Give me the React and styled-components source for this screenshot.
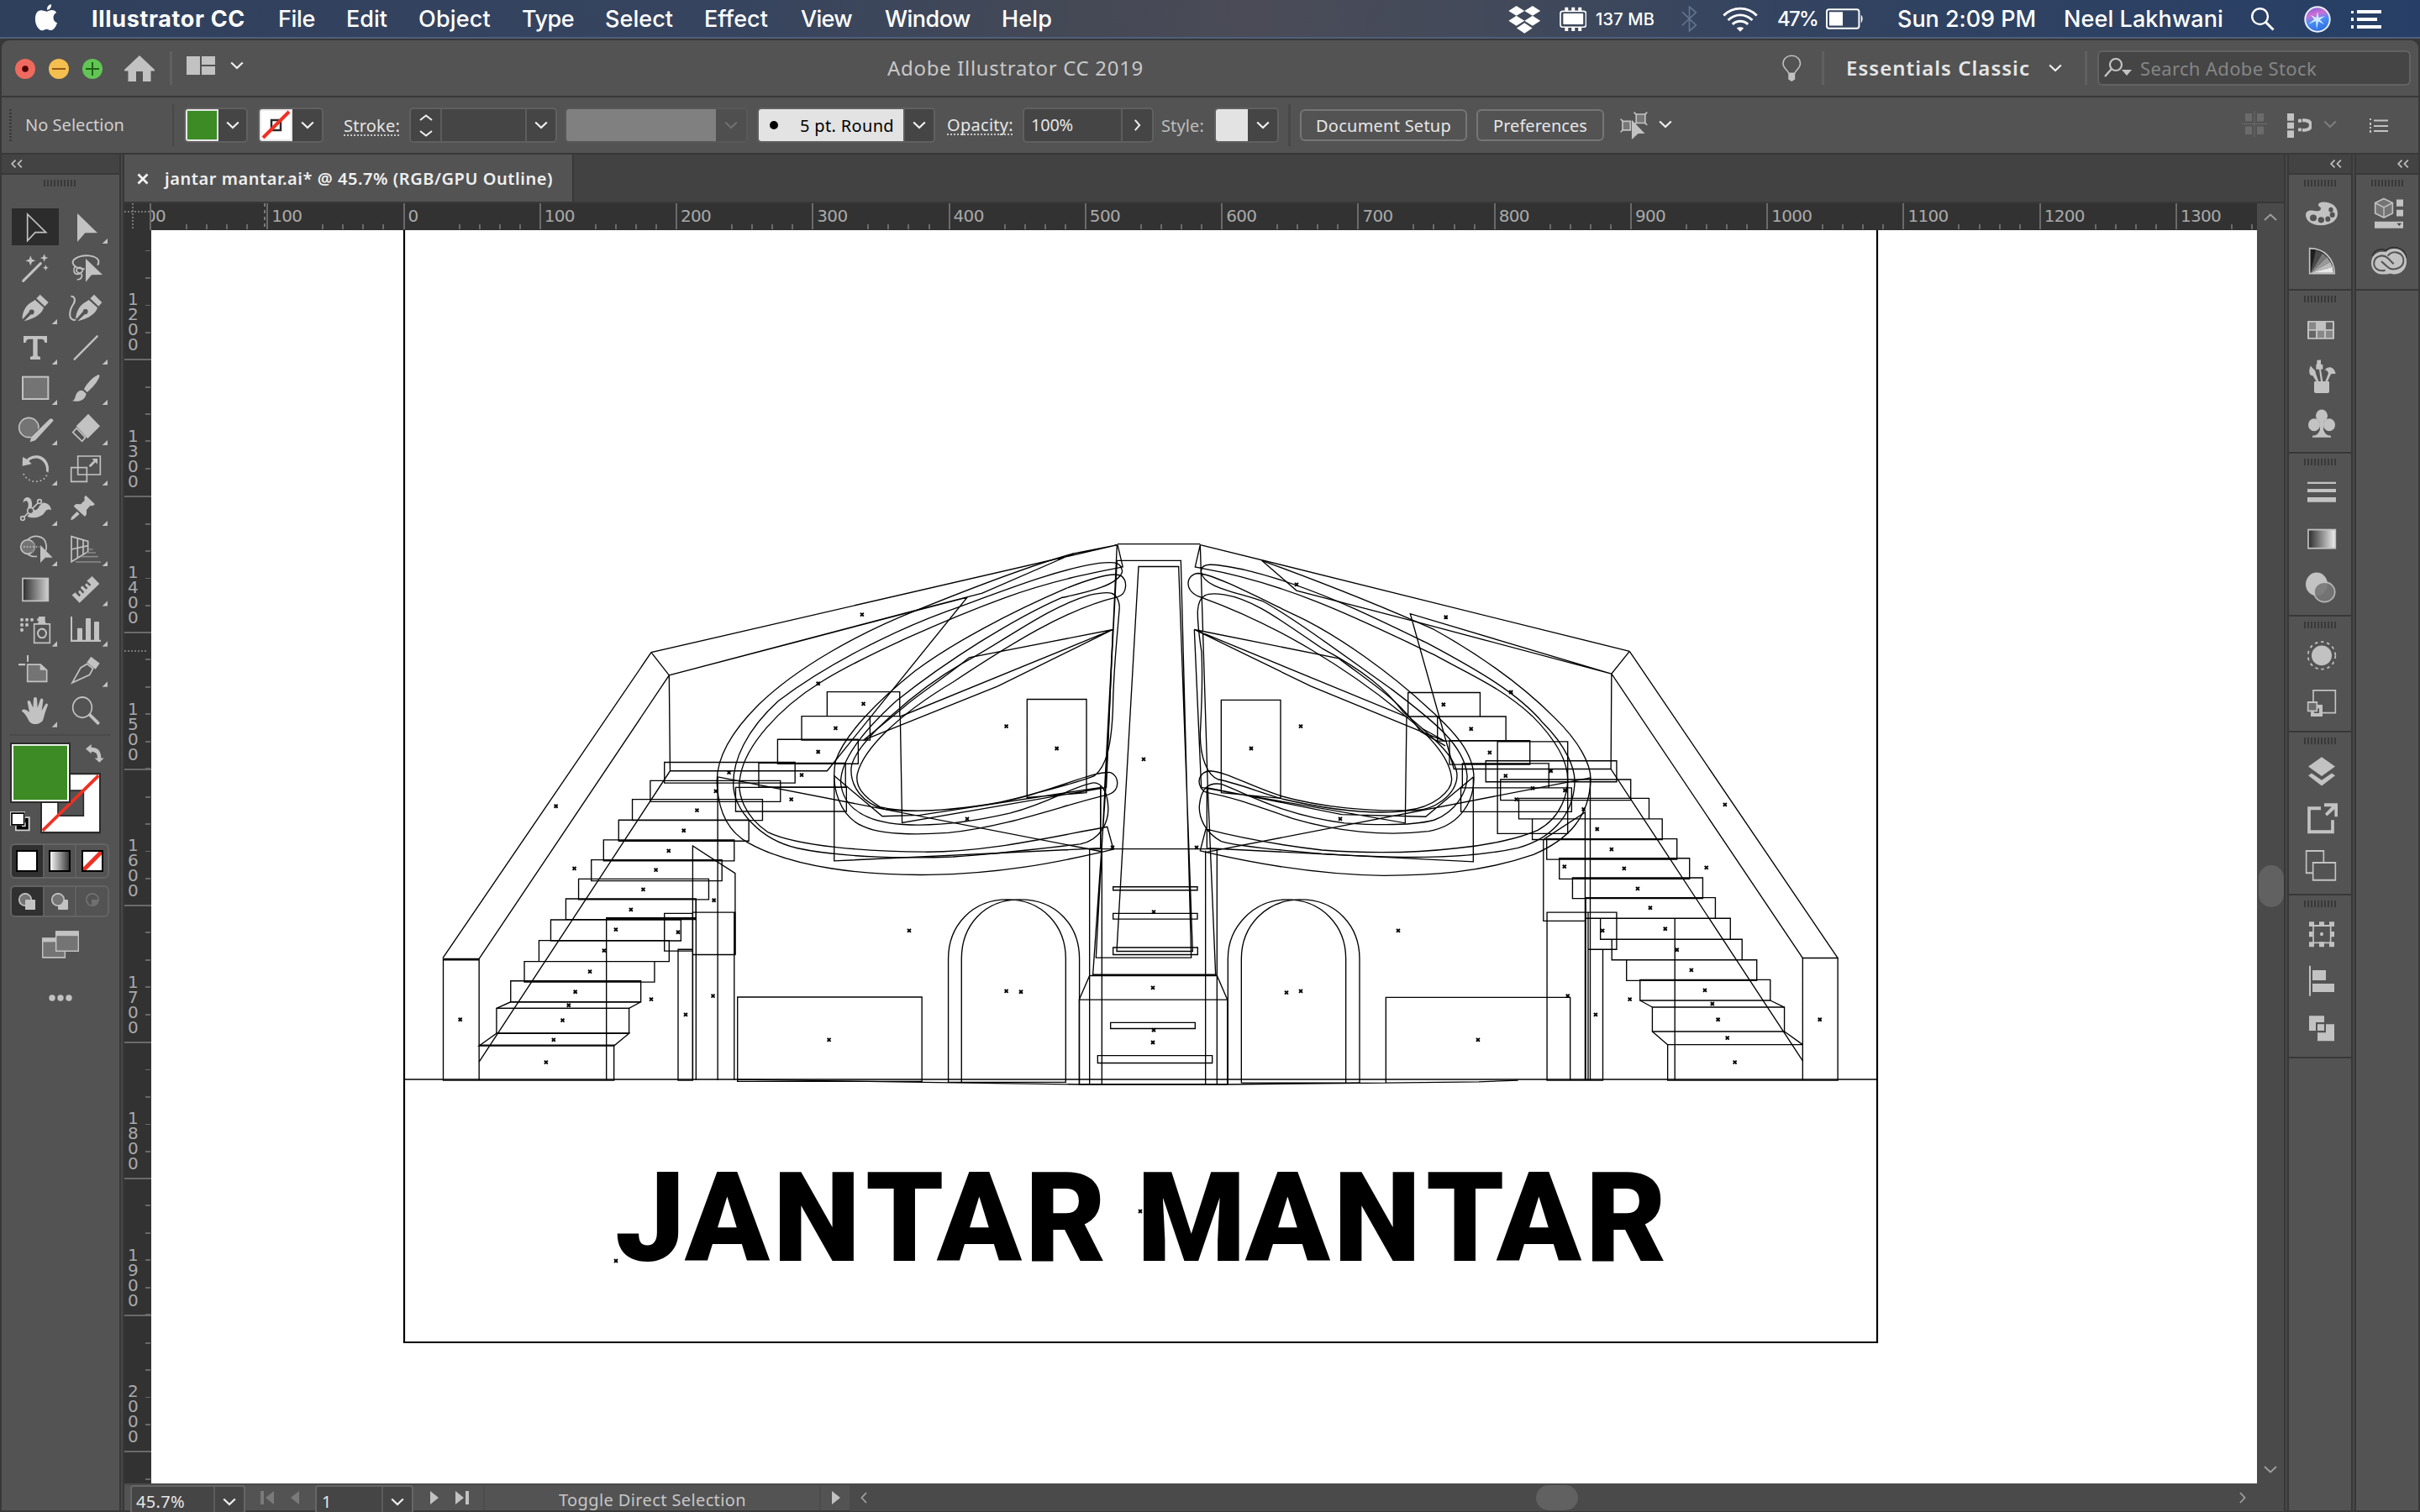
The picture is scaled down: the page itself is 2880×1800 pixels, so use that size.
import React, { useLayoutEffect, useRef, useState } from "react";
import styled, { createGlobalStyle, css } from "styled-components";

const C = {
  panel: "#535353",
  dark: "#383838",
  well: "#434343",
  field: "#454545",
  rim: "#666666",
  icon: "#c2c2c2",
  ruler: "#323232",
  tick: "#6a6a6a",
  green: "#3d8b25",
  red: "#ee3124",
};

const GlobalStyle = createGlobalStyle`
  *, *::before, *::after { box-sizing: border-box; }
  html, body { margin: 0; padding: 0; background: ${C.dark}; overflow: hidden; }
  body { font-family: "Noto Sans", "Open Sans", sans-serif; font-size: 20px; color: #e0e0e0; }
  svg { display: block; flex: none; }
`;

/* ---------- shared parts ---------- */

const Text = styled.span`
  display: inline-block;
  flex: none;
  white-space: pre;
  line-height: 1;
  margin-left: ${(p) => p.$ml || 0}px;
  width: ${(p) => p.$w}px;
  font-size: ${(p) => p.$size || 20}px;
  font-weight: ${(p) => p.$weight || 400};
  color: ${(p) => p.$color || "#e6e6e6"};
  padding-top: ${(p) => p.$drop || 0}px;
  ${(p) =>
    p.$dotted &&
    css`
      padding-bottom: 2px;
      background: repeating-linear-gradient(90deg, #c8c8c8 0 2px, transparent 2px 4px) bottom / 100% 2px no-repeat;
    `}
`;

// Tracks a label in or out so that it fills the width reserved for it.
function Label({ w, children, ...rest }) {
  const ref = useRef(null);
  const [spacing, setSpacing] = useState(0);
  useLayoutEffect(() => {
    const natural = ref.current.getBoundingClientRect().width;
    setSpacing((w - natural) / String(children).length);
  }, [w, children]);
  return (
    <Text $w={w} {...rest}>
      <span ref={ref} style={{ letterSpacing: spacing }}>
        {children}
      </span>
    </Text>
  );
}

const Glyph = styled.svg.attrs({ preserveAspectRatio: "none" })`
  width: ${(p) => p.$w}px;
  height: ${(p) => p.$h}px;
  margin-left: ${(p) => p.$ml || 0}px;
  margin-top: ${(p) => p.$mt || 0}px;
  align-self: ${(p) => p.$align || "center"};
  fill: ${(p) => p.$fill || C.icon};
`;

const Rule = styled.div`
  flex: none;
  width: ${(p) => p.$w || 3}px;
  height: ${(p) => p.$h}px;
  margin-left: ${(p) => p.$ml || 0}px;
  background: ${(p) => p.$color || "#606060"};
`;

const Chevron = ({ ml, mt, color = "#f0f0f0", w = 16 }) => (
  <Glyph viewBox="0 0 16 10" $w={w} $h={10} $ml={ml} $mt={mt}>
    <path d="M1.2 1.5 8 8 14.8 1.5" fill="none" stroke={color} strokeWidth="2.2" />
  </Glyph>
);

const Grip = styled.div`
  width: 38px;
  height: 8px;
  margin: ${(p) => p.$m || "6px auto 4px"};
  background: repeating-linear-gradient(90deg, #393939 0 2px, transparent 2px 4px);
`;

/* ---------- menu bar ---------- */

const MenuBar = styled.header`
  display: flex;
  align-items: center;
  height: 46px;
  padding: 1px 0 0 41px;
  border-bottom: 2px solid #4e5f7c;
  font-family: Inter, "Liberation Sans", sans-serif;
  background: linear-gradient(90deg, #2f405d 0%, #36445f 30%, #454955 45%, #4a4b57 52%, #434a5a 61%, #334360 74%, #273f66 100%);
`;

const menus = [
  ["File", 44, 39], ["Edit", 49, 37], ["Object", 86, 37], ["Type", 62, 37], ["Select", 81, 37],
  ["Effect", 76, 37], ["View", 61, 39], ["Window", 102, 39], ["Help", 60, 37],
];

function SystemMenu() {
  const white = { $color: "#fff", $weight: 500 };
  return (
    <MenuBar>
      <Glyph viewBox="44 12 30 96" $w={27} $h={32} $fill="#fff" $mt={-4}>
        <path d="M61 33C60 24 62 15 66 12C67 21 65 30 61 33ZM60 38C62 38 64 33 67 33C70 33 72 37 73 42C70 47 69 54 69 60C69 69 71 76 74 79C73 89 70 105 66 105C64 105 62 101 60 101C58 101 56 106 54 106C50 106 45 86 45 66C45 46 48 34 53 34C56 34 58 38 60 38Z" />
      </Glyph>
      <Label w={183} $ml={41} $size={27} $color="#fff" $weight={700}>Illustrator CC</Label>
      {menus.map(([name, w, gap]) => (
        <Label key={name} w={w} $ml={gap} $size={27} {...white}>{name}</Label>
      ))}
      <Glyph viewBox="44 15 116 103" $w={38.5} $h={34} $ml={543} $fill="#fff">
        <path d="M73 18 102 36 73 54 45 36ZM131 18 159 36 131 54 102 36ZM73 54 102 72 73 90 45 72ZM131 54 159 72 131 90 102 72ZM102 79 130 98 102 117 74 98Z" />
      </Glyph>
      <Glyph viewBox="227 22 98 86" $w={32.5} $h={29} $ml={22} $fill="#fff">
        <rect x="230" y="38" width="92" height="56" rx="8" fill="none" stroke="#fff" strokeWidth="5" />
        <rect x="240" y="46" width="72" height="38" rx="3" />
        <path d="M246 24h12v14h-12ZM270 24h12v14h-12ZM294 24h12v14h-12ZM246 94h12v14h-12ZM270 94h12v14h-12ZM294 94h12v14h-12Z" />
      </Glyph>
      <Label w={70} $ml={11} $size={20} {...white}>137 MB</Label>
      <Glyph viewBox="664 20 58 98" $w={19} $h={33} $ml={32}>
        <path d="M667 44 717 91 693 112V26L717 46 667 92" fill="none" stroke="#66738c" strokeWidth="5" />
      </Glyph>
      <Glyph viewBox="809 18 128 92" $w={42} $h={30} $ml={30} $fill="#fff">
        <g fill="none" stroke="#fff" strokeWidth="9">
          <path d="M813 50C847 16 899 16 933 50M829 67C855 42 891 42 917 67M845 82C861 67 885 67 901 82" />
        </g>
        <path d="M860 96Q873 88 886 96L873 109Z" />
      </Glyph>
      <Label w={48} $ml={23} $size={24} {...white}>47%</Label>
      <Glyph viewBox="1175 28 140 76" $w={46} $h={25} $ml={10} $fill="#fff">
        <rect x="1178" y="32" width="117" height="68" rx="8" fill="none" stroke="#fff" strokeWidth="6" />
        <path d="M1187 41h49v49h-49ZM1302 50Q1314 65 1302 82Z" />
      </Glyph>
      <Label w={165} $ml={39} $size={27} {...white}>Sun 2:09 PM</Label>
      <Label w={190} $ml={33} $size={27} {...white}>Neel Lakhwani</Label>
      <Glyph viewBox="0 0 30 30" $w={29} $h={29} $ml={32}>
        <circle cx="12" cy="12" r="9.7" fill="none" stroke="#fff" strokeWidth="2.5" />
        <path d="M19 19 28.5 28.5" stroke="#fff" strokeWidth="3" />
      </Glyph>
      <Glyph viewBox="0 0 32 32" $w={32} $h={32} $ml={35}>
        <defs>
          <linearGradient id="siri" x1="0.3" y1="0" x2="0.6" y2="1">
            <stop offset="0" stopColor="#7d62d8" />
            <stop offset="0.3" stopColor="#cf6fd4" />
            <stop offset="0.55" stopColor="#4a8df5" />
            <stop offset="1" stopColor="#2b6fe0" />
          </linearGradient>
        </defs>
        <circle cx="16" cy="16" r="14.700" fill="url(#siri)" stroke="#eef0fa" strokeWidth="2" />
        <path d="M16 7 17.500 14 25 12 19 16.500 24 22 17 18.500 15 28 14 18 5 22 12 16 8 11 14.500 14Z" fill="#e4f9ff" opacity="0.85" />
      </Glyph>
      <Glyph viewBox="0 0 36 22" $w={36} $h={22} $ml={24} $fill="#fff">
        <path d="M0 1h3v3H0ZM7 0h29v4H7ZM0 9h3v4H0ZM7 9h24v4H7ZM0 18h3v4H0ZM7 18h29v4H7Z" />
      </Glyph>
    </MenuBar>
  );
}

/* ---------- application title bar ---------- */

const AppWindow = styled.div`
  display: flex;
  flex-direction: column;
  width: 2880px;
  height: 1754px;
  padding: 2px 2px;
  border-radius: 10px 10px 0 0;
  background: ${C.dark};
`;

const TitleBar = styled.div`
  display: flex;
  align-items: center;
  height: 68px;
  border-bottom: 2px solid ${C.dark};
  border-radius: 9px 9px 0 0;
  background: ${C.panel};
`;

const Light = styled.div`
  display: grid;
  place-items: center;
  width: 24px;
  height: 24px;
  margin: 2px 0 0 ${(p) => p.$ml}px;
  border-radius: 50%;
  background: ${(p) => p.$color};
`;

const SearchBox = styled.div`
  display: flex;
  align-items: center;
  width: 373px;
  height: 42px;
  margin-left: 12px;
  padding-left: 6px;
  border: 2px solid #626262;
  border-radius: 6px;
  background: ${C.field};
`;

function AppTitle() {
  return (
    <TitleBar>
      <Light $ml={16} $color="#ee6a5f">
        <Glyph viewBox="0 0 8 8" $w={8} $h={8} $fill="#4d0000"><circle cx="4" cy="4" r="3.8" /></Glyph>
      </Light>
      <Light $ml={16} $color="#f5bf4f">
        <Glyph viewBox="0 0 16 2" $w={16} $h={2.5} $fill="#925a16"><path d="M0 0h16v2H0Z" /></Glyph>
      </Light>
      <Light $ml={16} $color="#62c655">
        <Glyph viewBox="0 0 16 16" $w={16} $h={16} $fill="#1f6416"><path d="M0 7h16v2H0ZM7 0h2v16H7Z" /></Glyph>
      </Light>
      <Glyph viewBox="0 0 36 31" $w={36} $h={31} $ml={26}>
        <path d="M18 0 36 17V18.500H31.500V31H22V19H14V31H4.500V18.500H0V17Z" />
      </Glyph>
      <Rule $h={40} $ml={18} />
      <Glyph viewBox="0 0 34 22" $w={34} $h={22} $ml={17} $mt={-7}>
        <path d="M0 0h16v22H0ZM18 0h16v10H18ZM18 12h16v10H18Z" />
      </Glyph>
      <Chevron ml={18} mt={-7} />
      <Label w={305} $ml={766} $size={24} $color="#c8c8c8">Adobe Illustrator CC 2019</Label>
      <Glyph viewBox="1022 190 68 98" $w={22.500} $h={32} $ml={760}>
        <path d="M1045 258C1042 245 1025 240 1025 223C1025 206 1038 194 1056 194C1074 194 1087 206 1087 223C1087 240 1070 245 1067 258Z" fill="none" stroke={C.icon} strokeWidth="4.500" />
        <path d="M1044 258h24v22l-12 8-12-8Z" />
      </Glyph>
      <Rule $h={40} $ml={24.500} />
      <Label w={219} $ml={26} $size={24} $weight={600}>Essentials Classic</Label>
      <Chevron ml={22} />
      <Rule $h={40} $ml={27} />
      <SearchBox>
        <Glyph viewBox="0 0 34 24" $w={34} $h={24}>
          <circle cx="14" cy="8" r="7" fill="none" stroke={C.icon} strokeWidth="2.200" />
          <path d="M9 13 1 22" stroke={C.icon} strokeWidth="2.500" />
          <path d="M21 14h12l-6 7Z" />
        </Glyph>
        <Label w={210} $ml={9} $size={22} $color="#858585">Search Adobe Stock</Label>
      </SearchBox>
    </TitleBar>
  );
}

/* ---------- control bar ---------- */

const ControlRow = styled.div`
  display: flex;
  align-items: center;
  height: 68px;
  padding-left: 9px;
  border-bottom: 2px solid ${C.dark};
  background: ${C.panel};
`;

const DotGrip = styled.div`
  width: 3px;
  height: 38px;
  background: repeating-linear-gradient(#393939 0 2px, transparent 2px 4px);
`;

const Combo = styled.div`
  display: flex;
  flex: none;
  width: ${(p) => p.$w}px;
  height: 42px;
  margin-left: ${(p) => p.$ml}px;
  border: 2px solid ${(p) => (p.$off ? "#585858" : "#606060")};
  border-radius: 5px;
  background: ${(p) => (p.$off ? "#4f4f4f" : C.field)};
  overflow: hidden;
`;

const Part = styled.div`
  display: flex;
  flex: ${(p) => (p.$w ? `0 0 ${p.$w}px` : 1)};
  align-items: center;
  justify-content: ${(p) => (p.$start ? "flex-start" : "center")};
  padding-left: ${(p) => p.$start || 0}px;
  border-left: ${(p) => (p.$line ? "2px solid #5c5c5c" : 0)};
  background: ${(p) => p.$bg || "transparent"};
`;

const GreenChip = styled.div`
  width: 39px;
  height: 38px;
  border: 2px solid #e8e8e8;
  background: ${C.green};
`;

const Steppers = styled.div`
  display: flex;
  flex-direction: column;
  gap: 11px;
`;

const PushButton = styled.button`
  display: flex;
  flex: none;
  align-items: center;
  justify-content: center;
  width: ${(p) => p.$w}px;
  height: 38px;
  margin-left: ${(p) => p.$ml}px;
  padding: 0;
  border: 2px solid #767676;
  border-radius: 6px;
  background: transparent;
  font-family: inherit;
`;

function ControlBar() {
  return (
    <ControlRow>
      <DotGrip />
      <Label w={118} $ml={16} $color="#cfcfcf">No Selection</Label>
      <Rule $w={2} $h={50} $ml={57} $color="#484848" />
      <Combo $w={76} $ml={12}>
        <Part $w={38}><GreenChip /></Part>
        <Part><Chevron /></Part>
      </Combo>
      <Combo $w={78} $ml={12}>
        <Part $w={39} $bg="#e8e8e8">
          <Glyph viewBox="0 0 39 38" $w={39} $h={38}>
            <path d="M2 2h35v34H2Z" fill="#fff" />
            <path d="M14 13h11v12H14Z" fill="none" stroke="#2b2b2b" strokeWidth="2.500" />
            <path d="M4 34 35 3" stroke={C.red} strokeWidth="4" />
          </Glyph>
        </Part>
        <Part><Chevron /></Part>
      </Combo>
      <Label w={67} $ml={24} $dotted $drop={3}>Stroke:</Label>
      <Combo $w={176} $ml={11}>
        <Part $w={35}>
          <Steppers>
            <Glyph viewBox="0 0 16 8" $w={16} $h={8}><path d="M1 7 8 1.500 15 7" fill="none" stroke="#eee" strokeWidth="2" /></Glyph>
            <Glyph viewBox="0 0 16 8" $w={16} $h={8}><path d="M1 1 8 6.500 15 1" fill="none" stroke="#eee" strokeWidth="2" /></Glyph>
          </Steppers>
        </Part>
        <Part $line />
        <Part $w={36} $line><Chevron /></Part>
      </Combo>
      <Combo $w={218} $ml={9} $off>
        <Part $bg="#808080" />
        <Part $w={36}><Chevron color="#707070" /></Part>
      </Combo>
      <Combo $w={212} $ml={11}>
        <Part $w={172} $bg="#e3e3e3" $start={13}>
          <Glyph viewBox="0 0 10 10" $w={10} $h={10} $fill="#000"><circle cx="5" cy="5" r="5" /></Glyph>
          <Label w={112} $ml={26} $drop={2} $color="#000">5 pt. Round</Label>
        </Part>
        <Part $line><Chevron /></Part>
      </Combo>
      <Label w={79} $ml={14} $dotted $drop={2}>Opacity:</Label>
      <Combo $w={156} $ml={11}>
        <Part $start={8}><Label w={50}>100%</Label></Part>
        <Part $w={37} $line>
          <Glyph viewBox="0 0 10 16" $w={9} $h={14}><path d="M2 1 8 8 2 15" fill="none" stroke="#eee" strokeWidth="2.200" /></Glyph>
        </Part>
      </Combo>
      <Label w={51} $ml={9} $drop={2} $color="#bdbdbd">Style:</Label>
      <Combo $w={77} $ml={12}>
        <Part $w={38} $bg="#e3e3e3" />
        <Part><Chevron /></Part>
      </Combo>
      <Rule $w={3} $h={50} $ml={11} $color="#484848" />
      <PushButton $w={199} $ml={11}><Label w={161} $drop={1}>Document Setup</Label></PushButton>
      <PushButton $w={152} $ml={11}><Label w={112} $drop={1}>Preferences</Label></PushButton>
      <Glyph viewBox="449 395 98 98" $w={32.500} $h={33} $ml={19}>
        <g fill="#777" stroke={C.icon} strokeWidth="5">
          <path d="M458 429h28v31h-28ZM507 404h32v31h-32Z" />
          <path d="M451 421l8 8M451 467l8-8M499 397l8 8M546 397l-8 8M546 442l-8-8M499 442l8-8" fill="none" />
        </g>
        <path d="M491 424 538 472 514 472 491 493Z" />
      </Glyph>
      <Chevron ml={13} mt={-3} />
      <Glyph viewBox="0 0 30 30" $w={30} $h={31} $ml={678} $fill="#6b6b6b" $mt={-3}>
        <path d="M4 3h8v9H4ZM18 3h8v9h-8ZM4 18h8v9H4ZM18 18h8v9h-8ZM14.500 0h1v30h-1ZM0 14.500h30v1H0Z" />
      </Glyph>
      <Glyph viewBox="0 0 30 30" $w={30} $h={29} $ml={23}>
        <path d="M1 0h8v9H1ZM1 11h8v8H1ZM1 21h8v9H1ZM14 7h4v4h-4ZM14 18h4v4h-4Z" />
        <path d="M19 8.500h3Q29 9 29 14.500T22 20.500H19" fill="none" stroke={C.icon} strokeWidth="4" />
      </Glyph>
      <Chevron ml={14} mt={-3} color="#7c7c7c" />
      <Glyph viewBox="0 0 22 17" $w={22} $h={17} $ml={39}>
        <path d="M0 0h2v2H0ZM5 1.500h17v2H5ZM0 5h2v3H0ZM0 10h2v2H0ZM5 8h17v2H5ZM5 14h17v2H5ZM0 14h2v3H0Z" />
      </Glyph>
    </ControlRow>
  );
}

/* ---------- tools panel ---------- */

const Workspace = styled.div`
  display: flex;
  flex: 1;
  min-height: 0;
`;

const PanelHead = styled.div`
  display: flex;
  align-items: center;
  justify-content: ${(p) => (p.$right ? "flex-end" : "flex-start")};
  height: 24px;
  padding: 0 11px;
  border-bottom: 2px solid ${C.dark};
  background: ${C.well};
`;

const Collapse = () => (
  <Glyph viewBox="0 0 14 10" $w={14} $h={10}>
    <path d="M5.500 .7 1.200 5l4.300 4.300M12.800.7 8.500 5l4.300 4.300" fill="none" stroke={C.icon} strokeWidth="1.700" />
  </Glyph>
);

const Seam = styled.div`
  flex: none;
  width: 6px;
  border: solid ${C.dark};
  border-width: 0 2px;
  background: #484848;
`;

const ToolPanel = styled.aside`
  flex: none;
  width: 140px;
  background: ${C.panel};
`;

const ToolGrid = styled.div`
  display: grid;
  grid-template-columns: 60px 60px;
  grid-auto-rows: 48px;
  margin: 0 10px;
`;

const ToolCell = styled.button`
  display: block;
  padding: 0;
  border: 0;
  background: transparent;
  ${(p) => p.$on && css`
    background: linear-gradient(#2c2c2c, #2c2c2c) 2px 2px / 56px 44px no-repeat;
  `}
`;

const st = (w = 6) => ({ fill: "none", stroke: C.icon, strokeWidth: w });

// Rows 0-8 use units of 1/3 px; the later rows are drawn on a slightly flatter grid.
const tools = [
  [<path d="M98 225V320L126 290H164Z" {...st(5)} />, 0],
  [<path d="M276 222V324L304 292H348Z" />, 1],
  [<><path d="M83 463 145 401" {...st(9)} strokeLinecap="round" /><path d="M109 373l5 13 13 5-13 5-5 13-5-13-13-5 13-5ZM158 367l4 10 10 4-10 4-4 10-4-10-10-4 10-4ZM163 406l3 7 7 3-7 3-3 8-3-8-7-3 7-3Z" /></>, 0],
  [<><path d="M302 421C262 418 248 396 270 383C297 366 343 371 352 391C353 398 352 402 348 407" {...st()} /><path d="M268 411C260 425 264 439 277 439C291 439 301 424 290 417C281 412 270 420 274 430C281 439 296 433 292 447C290 455 284 459 275 458" {...st(5)} /><path d="M306 384V467L327 442 366 441Z" /></>, 0],
  [<path d="M143 512 173 540 160 554 130 526ZM125 531 156 559C151 577 132 596 86 607L111 583A9 9 0 1 0 104 574L81 600C77 594 83 566 97 551C105 543 115 538 125 531Z" />, 1],
  [<><path d="M336 512 364 540 352 554 322 526ZM317 531 348 559C343 577 324 596 277 607L303 582A9 9 0 1 0 296 573L272 600C268 594 275 566 289 551C297 543 307 538 317 531Z" /><path d="M253 518C267 517 271 532 262 546C248 567 240 603 270 603" {...st()} /></>, 0],
  [<path d="M84 660H168V684H160Q158 672 150 671H134V728Q134 733 144 734V744H108V734Q118 733 118 728V671H102Q94 672 92 684H84Z" />, 1],
  [<path d="M266 743 347 661" {...st(7)} strokeLinecap="round" />, 1],
  [<rect x="81" y="806" width="91" height="79" fill="#747474" stroke={C.icon} strokeWidth="6" />, 1],
  [<path d="M352 798C358 799 356 808 345 824C334 840 319 854 311 861L300 850C307 834 328 808 352 798ZM297 856 308 866C304 887 286 897 258 892C270 886 267 876 273 866C279 855 289 852 297 856Z" />, 1],
  [<><circle cx="103" cy="987" r="35" fill="#747474" stroke={C.icon} strokeWidth="5" /><path d="M184 963 120 1030" stroke={C.panel} strokeWidth="28" /><path d="M177 957Q186 950 191 962L126 1033 107 1039 112 1020Z" /></>, 1],
  [<><path d="M315 938 357 982 313 1026 272 982Z" /><path d="M273 989 305 1022 293 1036 260 1004Z" {...st(5)} /></>, 1],
  [<><path d="M81 1092 96 1100C112 1083 148 1081 164 1104C174 1118 176 1134 172 1148L165 1143C169 1109 134 1081 103 1106L113 1117 80 1124Z" /><path d="M84 1152C98 1186 153 1191 168 1155" {...st(5)} strokeDasharray="5 9" /></>, 1],
  [<><path d="M278 1089H358V1155H278ZM254 1130H310V1180H254Z" {...st(5)} /><path d="M328 1098H348V1118L341 1111 323 1129 317 1123 335 1105Z" /></>, 1],
  [<><path d="M83 1256C82 1233 106 1230 112 1247C117 1264 111 1277 122 1281C139 1288 139 1253 160 1256C176 1259 182 1271 183 1282C177 1279 167 1276 160 1289C152 1305 118 1316 98 1304C87 1295 108 1266 99 1253C94 1245 86 1249 83 1256Z" /><path d="M86 1306 136 1256" stroke={C.panel} strokeWidth="12" /><path d="M86 1306 136 1256" {...st(5)} /><g fill={C.panel} stroke={C.icon} strokeWidth="5"><circle cx="81" cy="1311" r="7" /><circle cx="141" cy="1251" r="7" /><circle cx="109" cy="1284" r="11" /></g></>, 1],
  [<path d="M306 1229 339 1261 331 1267 322 1266 309 1281V1297L303 1305 263 1268 271 1260 288 1261 302 1247 301 1236ZM275 1287 284 1296 262 1315 252 1317 256 1306Z" />, 1],
  [<><circle cx="99" cy="1413" r="25" fill="#747474" stroke={C.icon} strokeWidth="5" /><path d="M99 1388C119 1366 157 1374 163 1398Q170 1421 158 1437M99 1438Q110 1450 132 1447" {...st(5)} /><path d="M113 1394Q135 1413 113 1434" fill="none" stroke="#888" strokeWidth="4" /><path d="M84 1413H141" {...st(5)} strokeDasharray="5 6" /><path d="M144 1407V1470L162 1451H188Z" /></>, 1],
  [<><path d="M255 1376 314 1393V1430L255 1466ZM277 1382V1453M297 1388V1441M255 1422 314 1409" {...st(5)} /><path d="M315 1422H332M307 1434H342M289 1448H350M270 1467H360" fill="none" stroke="#8a8a8a" strokeWidth="5" /></>, 1],
  [<rect x="81" y="24" width="91" height="75" fill="url(#ramp)" stroke={C.icon} strokeWidth="5" />, 0],
  [<path d="M329 17 355 42 284 106 257 80 268 71 283 85 288 80 279 69 285 63 296 74 301 69 287 55 294 48 308 61 313 56 303 46 309 40 320 50 325 45 310 32Z" />, 1],
  [<><g><circle cx="78" cy="162" r="6" /><circle cx="96" cy="162" r="6" /><circle cx="114" cy="162" r="6" /><circle cx="78" cy="179" r="6" /><circle cx="96" cy="179" r="6" /><circle cx="78" cy="196" r="6" /></g><path d="M122 176H178V239H122Z" {...st(5)} /><circle cx="150" cy="207" r="15" {...st(6)} /><path d="M133 157H138V151H161V168L166 175H134L139 166H133Z" /></>, 1],
  [<path d="M252 151H258V229H360V235H252ZM276 193Q276 190 279 190H291Q294 190 294 193V231H276ZM306 160Q306 157 309 157H321Q324 157 324 160V231H306ZM336 171Q336 168 339 168H351Q354 168 354 171V231H336Z" />, 1],
  [<><path d="M66 311H90M99 280V302" {...st(6)} /><path d="M98 311H145L167 330V368H98Z" fill="#747474" stroke={C.icon} strokeWidth="5" /><path d="M143 309V330H168Z" /></>, 0],
  [<><path d="M325 285 356 307 341 327 310 304Z" /><path d="M311 309 332 325 320 345 258 372 288 322Z" {...st(5)} /></>, 1],
  [<path d="M79 463C84 458 94 461 105 470L98 437C97 430 106 429 109 436L118 455 120 425C121 418 131 418 132 425L134 455 144 428C147 421 155 424 154 431L149 465 162 444C166 438 173 443 170 449C163 465 158 482 154 495C148 510 119 515 107 503C99 495 95 478 78 467Z" />, 1],
  [<><circle cx="294" cy="454" r="34" {...st(5)} /><path d="M321 479 350 506" {...st(11)} strokeLinecap="round" /></>, 0],
];

function toolBox(col, row) {
  return row < 9
    ? `${36 + 180 * col} ${198 + 144 * row} 180 144`
    : `${36 + 180 * col} ${(246 + 48 * row - 680) * 2.8} 180 134.4`;
}

const ModeGroup = styled.div`
  display: flex;
  width: 118px;
  height: ${(p) => p.$h}px;
  margin: ${(p) => p.$mt}px 0 0 10px;
  border: 2px solid #646464;
  border-radius: 6px;
  overflow: hidden;
`;

const Mode = styled.button`
  display: grid;
  flex: 1;
  place-items: center;
  padding: 0;
  border: 0;
  border-left: ${(p) => (p.$first ? 0 : "2px solid #606060")};
  background: ${(p) => (p.$first ? "#303030" : "transparent")};
`;

const Divider = styled.div`
  height: 2px;
  margin: 4px 10px 4px;
  background: #4a4a4a;
`;

function Tools() {
  return (
    <ToolPanel>
      <PanelHead><Collapse /></PanelHead>
      <Grip $m="6px 0 24px 50px" />
      <ToolGrid>
        {tools.map(([art, more], n) => {
          const col = n % 2;
          const row = Math.floor(n / 2);
          return (
            <ToolCell key={n} $on={n === 0}>
              <Glyph viewBox={toolBox(col, row)} $w={60} $h={48}>
                <defs>
                  <linearGradient id="ramp">
                    <stop offset="0" stopColor="#2e2e2e" />
                    <stop offset="1" stopColor="#d0d0d0" />
                  </linearGradient>
                </defs>
                {art}
                {more === 1 && (
                  row < 9
                    ? <path d={`M${204 + 180 * col} ${312 + 144 * row}v18h-19Z`} />
                    : <path d={`M${204 + 180 * col} ${-36 + 134.5 * (row - 8)}v18h-19Z`} />
                )}
              </Glyph>
            </ToolCell>
          );
        })}
      </ToolGrid>
      <Divider />
      <Glyph viewBox="36 560 360 336" $w={120} $h={120} $ml={10}>
        <path d="M147 675H357V871H147Z" fill="#fff" stroke="#2b2b2b" strokeWidth="6" />
        <path d="M207 731H298V815H207Z" fill={C.panel} stroke="#2b2b2b" strokeWidth="5" />
        <path d="M152 865 352 681" stroke={C.red} strokeWidth="11" />
        <path d="M39 574H249V770H39Z" fill="#fff" stroke="#2b2b2b" strokeWidth="6" />
        <path d="M48 582H240V762H48Z" fill={C.green} />
        <path d="M326 577V587C352 587 361 602 361 623H371L355 638 338 623H348C348 608 342 602 326 601V608L306 592Z" />
        <path d="M54 818H107V866H54Z" fill="#d0d0d0" />
        <path d="M59 823H101V861H59Z" fill="#000" />
        <path d="M36 801H90V848H36Z" fill="#d0d0d0" />
        <path d="M42 807H86V845H42Z" fill="#fff" stroke="#000" strokeWidth="5" />
        <path d="M78 850H90V838" fill="none" stroke="#d0d0d0" strokeWidth="4" />
      </Glyph>
      <ModeGroup $h={42} $mt={4}>
        <Mode $first>
          <Glyph viewBox="0 0 26 26" $w={26} $h={26}><path d="M1 1h24v24H1Z" fill="#fff" stroke="#000" strokeWidth="2" /></Glyph>
        </Mode>
        <Mode>
          <Glyph viewBox="0 0 26 26" $w={26} $h={26}>
            <defs><linearGradient id="fade"><stop offset="0" stopColor="#fff" /><stop offset="1" stopColor="#333" /></linearGradient></defs>
            <path d="M1 1h24v24H1Z" fill="url(#fade)" stroke="#000" strokeWidth="2" />
          </Glyph>
        </Mode>
        <Mode>
          <Glyph viewBox="0 0 26 26" $w={26} $h={26}>
            <path d="M1 1h24v24H1Z" fill="#fff" />
            <path d="M2 24 24 2" stroke={C.red} strokeWidth="5" />
            <path d="M1 1h24v24H1Z" fill="none" stroke="#000" strokeWidth="2" />
          </Glyph>
        </Mode>
      </ModeGroup>
      <ModeGroup $h={38} $mt={8}>
        {[0, 1, 2].map((n) => (
          <Mode key={n} $first={n === 0}>
            <Glyph viewBox="0 0 20 20" $w={20} $h={20} $fill={n === 2 ? "#707070" : C.icon}>
              {n < 2 && <rect x="8" y="8" width="12" height="12" rx="1" />}
              <circle cx={n === 2 ? 10 : 8} cy="8" r="7.200" fill={n === 2 ? "none" : "#747474"} stroke={n === 2 ? "#707070" : C.icon} strokeWidth="1.700" />
              {n === 0 && <rect x="8" y="8" width="12" height="12" rx="1" />}
              {n === 2 && <path d="M9 8h8q-1 7-8 7Z" />}
            </Glyph>
          </Mode>
        ))}
      </ModeGroup>
      <Glyph viewBox="150 1197 132 91" $w={44} $h={33} $ml={48} $mt={16}>
        <path d="M152 1222H232V1285H152Z" fill="#747474" stroke={C.icon} strokeWidth="4.500" />
        <path d="M150 1221H200V1234H150Z" />
        <path d="M200 1200H280V1264H200Z" fill="#747474" stroke={C.icon} strokeWidth="4.500" />
        <path d="M198 1198H282V1214H198Z" />
      </Glyph>
      <Glyph viewBox="0 0 28 8" $w={28} $h={8} $ml={56} $mt={43}>
        <circle cx="4" cy="4" r="3.700" /><circle cx="14" cy="4" r="3.700" /><circle cx="24" cy="4" r="3.700" />
      </Glyph>
    </ToolPanel>
  );
}

/* ---------- document: tab, rulers ---------- */

const Document = styled.main`
  display: flex;
  flex: 1;
  flex-direction: column;
  min-width: 0;
`;

const TabStrip = styled.div`
  height: 58px;
  border-bottom: 2px solid ${C.dark};
  background: #424242;
`;

const Tab = styled.div`
  display: flex;
  align-items: center;
  width: 535px;
  height: 56px;
  padding: 2px 0 0 15px;
  border-right: 2px solid ${C.dark};
  background: ${C.panel};
`;

const View = styled.div`
  display: grid;
  grid-template: 32px 1492px 32px / 32px 2506px 32px;
`;

const Corner = styled.div`
  border-right: 2px solid ${C.tick};
  background:
    repeating-linear-gradient(90deg, #777 0 2px, transparent 2px 4px) 0 9px / 32px 2px no-repeat,
    repeating-linear-gradient(#777 0 2px, transparent 2px 4px) 9px 0 / 2px 32px no-repeat,
    ${C.ruler};
`;

const HRuler = styled.div`
  display: flex;
  height: 32px;
  overflow: hidden;
  background:
    repeating-linear-gradient(#777 0 4px, transparent 4px 8px) 134px 0 / 2px 32px no-repeat,
    ${C.ruler};
`;

const HUnit = styled.div`
  display: flex;
  flex: none;
  align-items: flex-end;
  width: 162.28px;
  height: 32px;
  &:first-child { margin-left: -25px; }
`;

const HTick = styled.div`
  flex: 1;
  height: ${(p) => (p.$major ? 31 : 6)}px;
  margin-bottom: 1px;
  border-left: 2px solid ${C.tick};
  padding: 5px 0 0 4px;
`;

const RulerText = styled.span`
  display: block;
  width: 60px;
  font: 20px/20px "DejaVu Sans", sans-serif;
  letter-spacing: -0.7px;
  color: #a9a9a9;
`;

const VRuler = styled.div`
  display: flex;
  flex-direction: column;
  overflow: hidden;
  background:
    repeating-linear-gradient(90deg, #777 0 2px, transparent 2px 4px) 0 500px / 28px 2px no-repeat,
    ${C.ruler};
`;

const VUnit = styled.div`
  display: flex;
  flex: none;
  align-items: flex-end;
  justify-content: space-between;
  height: 162.500px;
  padding: 0 1px 0 0;
  border-bottom: 2px solid ${C.tick};
  &:first-child { margin-top: -7.500px; }
`;

const VText = styled.span`
  width: 13px;
  margin: 0 0 8px 4px;
  font: 20px/18px "DejaVu Sans", sans-serif;
  color: #a9a9a9;
  word-break: break-all;
`;

const VTicks = styled.div`
  width: 6px;
  height: 162.500px;
  margin-bottom: -2px;
  background: repeating-linear-gradient(transparent 0 30.500px, ${C.tick} 30.500px 32.500px);
`;

const hundreds = Array.from({ length: 16 }, (_, n) => Math.abs(n * 100 - 200));
const downUnits = Array.from({ length: 9 }, (_, n) => 1200 + n * 100);

/* ---------- artwork ---------- */

const Canvas = styled.div`
  background: #fff;
  overflow: hidden;
`;

const Sheet = styled.svg`
  width: 2506px;
  height: 1492px;
  fill: none;
  stroke: #000;
  stroke-width: 1.350px;
  path { vector-effect: non-scaling-stroke; }
`;

const Lettering = styled.text`
  font: 900 148px Roboto, "Open Sans", sans-serif;
  fill: #000;
  stroke: none;
`;

const boxes = (list) => list.map(([a, b, c, d]) => `M${a} ${b}H${c}V${d}H${a}Z`).join("");
const marks = (list, kx, ky) =>
  list.map(([x, y]) => `M${x - 2 * kx} ${y - 2 * ky}l${4 * kx} ${4 * ky}m0 ${-4 * ky}l${-4 * kx} ${4 * ky}`).join("");

const westBoxes = [
  [49, 1168, 125, 1492], [863, 456, 1017, 521], [809, 521, 954, 585], [758, 583, 929, 648], [718, 646, 902, 710],
  [669, 711, 904, 775], [518, 644, 795, 699], [488, 693, 764, 749], [450, 743, 726, 799], [421, 798, 697, 854],
  [389, 851, 666, 907], [363, 904, 640, 960], [336, 955, 612, 1010], [309, 1008, 585, 1063], [277, 1064, 553, 1120],
  [252, 1119, 528, 1175], [221, 1175, 497, 1230], [192, 1227, 468, 1283], [162, 1300, 443, 1366], [125, 1398, 411, 1492],
  [578, 1044, 668, 1157], [547, 1143, 578, 1492], [673, 1270, 1064, 1495],
];
const westLines =
  "M48 1166 490 351 1479 64M125 1168 528 412 1160 204 863 667H530L125 1443M528 412 1040 242 1192 193 1386 87 1479 64M490 351 528 412 530 667M48 1171H125" +
  "M192 1283H468L443 1300H162ZM162 1367H443L411 1400H125ZM585 1059H395V1492M395 1062H585M578 1492V867L668 940V1157M578 1047H518V1147H578M585 1008V1492M666 1044V1492M631 683V1492" +
  "M673 1490 1064 1497 1397 1503M1287 476H1413V725L1287 738Z" +
  "M1120 1497V1168C1120 1080 1170 1010 1245 1010C1320 1010 1369 1080 1369 1168V1497ZM1148 1497V1168C1148 1080 1195 1010 1272 1010C1350 1010 1398 1080 1398 1168V1503" +
  "M1469 290 1164 365C1110 420 1060 460 1030 492L940 585 1225 441ZM1469 290 1018 522 1022 805 1455 711ZM878 680 980 788 1060 785 1443 711 1443 873 878 907ZM631 683 1445 882";
const westCurves =
  "M1386 87C1290 120 1160 184 1050 240C930 300 800 390 718 490C650 575 625 650 630 710C634 780 655 830 695 858C790 925 940 946 1080 944C1220 942 1340 915 1470 876L1457 816" +
  "C1330 845 1200 884 1070 883C950 882 800 868 737 830C690 790 670 730 679 680C690 600 760 500 850 430C940 360 1120 260 1240 205C1340 160 1420 140 1490 123L1479 64" +
  "M1489 135C1486 112 1478 108 1440 113C1350 130 1250 180 1120 240C1000 295 860 385 760 480C690 560 664 640 664 700C664 770 720 850 800 873C900 900 1050 900 1130 896C1230 888 1330 872 1400 862C1445 850 1460 800 1459 765C1458 725 1445 695 1425 699C1380 710 1340 750 1250 780C1180 800 1120 811 1060 811C980 812 900 790 892 700C890 640 940 560 1010 480C1120 370 1260 260 1360 205C1420 190 1482 170 1489 135" +
  "M1479 203C1500 195 1500 160 1487 147C1475 138 1440 145 1370 180C1250 245 1130 325 1050 400C970 480 900 570 881 640C870 710 890 790 940 815C980 838 1060 837 1120 832C1250 815 1370 755 1460 730C1485 720 1483 680 1464 671C1420 668 1350 720 1230 750C1130 775 1030 780 975 763C940 735 922 710 927 675C940 610 1010 520 1130 430C1250 330 1370 235 1479 203" +
  "M1483 230C1480 185 1460 187 1420 198C1330 230 1240 320 1150 380C1060 445 920 590 914 660C912 710 940 755 985 769C1080 785 1240 755 1310 725C1370 705 1410 690 1430 680C1455 655 1466 600 1469 500C1470 400 1476 340 1483 230";

const midBoxes = [
  [133, 1277, 662, 1503], [254, 976, 555, 985], [254, 1047, 555, 1062], [254, 1138, 556, 1157], [245, 1338, 547, 1354], [199, 1426, 608, 1446],
];
const midLines =
  "M270 62H565M268 64 228 711 182 1210H620L592 711 565 64M268 106H496L533 1165H193ZM345 122H488L538 1148H267ZM565 64 547 123 572 127" +
  "M170 1213H625L662 1277M170 1213 133 1277M170 1503V875H625V1503M214 1503V875M584 1503V880M254 290 224 711M544 290 569 711M209 708V873M589 711V873M133 1503H662L1228 1499 1560 1496 1700 1492" +
  "M640 478H852V740L640 725ZM1228 1498V1271H1886V1492" +
  "M664 1503V1168C664 1080 760 1010 873 1010C1000 1010 1085 1080 1085 1168V1499M712 1499V1168C712 1080 800 1010 924 1010C1050 1010 1134 1080 1134 1168V1499H712" +
  "M544 290 1060 367C1180 435 1280 480 1352 562L1440 600M544 290 1302 523 1297 806 569 711M544 290 960 441 1440 588 1360 555M1540 683 1370 789 1070 783 592 712M1540 683V909L590 873M1959 685 585 884" +
  "M565 64 2098 348M785 106 909 186 1315 265 2033 408 1315 248 1471 662H2031";
const midCurves =
  "M785 106C1020 170 1250 240 1400 290C1580 365 1730 450 1830 525C1920 590 1960 650 1959 690C1955 790 1880 850 1755 890C1560 940 1380 946 1220 946C1000 944 780 918 565 880L585 822" +
  "C720 848 850 865 1000 878C1180 888 1330 886 1480 873C1600 865 1710 845 1770 825C1860 790 1877 720 1877 690C1877 640 1830 580 1750 520C1640 445 1540 415 1400 357C1180 280 900 170 572 127" +
  "M568 135C568 112 600 112 720 130C950 170 1180 255 1380 328C1560 400 1700 460 1790 540C1870 600 1905 660 1902 700C1896 790 1810 850 1700 872C1500 905 1250 900 1000 888C850 878 700 868 640 855C580 830 560 790 562 760C568 715 590 697 640 702C740 730 860 785 1080 806C1200 812 1330 812 1400 798C1480 775 1520 720 1518 680C1510 600 1400 535 1250 450C1080 360 900 260 790 215C700 190 575 180 568 135" +
  "M572 205C500 190 515 140 560 140C620 145 760 200 900 250C1060 305 1250 410 1380 500C1470 560 1545 620 1542 690C1540 760 1480 815 1380 828C1220 842 1050 828 900 795C780 765 690 738 590 725C550 715 550 670 600 667C660 670 720 700 850 733C1000 765 1180 775 1300 772C1400 765 1463 720 1463 690C1460 640 1400 580 1280 510C1100 400 850 280 572 205" +
  "M556 240C560 195 590 190 650 197C760 210 860 270 1000 340C1150 400 1230 450 1290 510C1400 580 1482 630 1482 680C1480 730 1400 775 1320 772C1200 785 1050 775 860 742C780 725 700 700 630 690C590 680 565 630 565 570C570 500 575 430 570 350C562 310 555 280 556 240";

const eastBoxes = [
  [-68, 458, 172, 522], [30, 522, 258, 587], [70, 586, 338, 650], [113, 647, 401, 712], [108, 712, 477, 776], [230, 589, 464, 834],
  [191, 640, 627, 696], [240, 690, 674, 745], [301, 740, 735, 795], [346, 795, 779, 850], [394, 848, 828, 903], [436, 900, 870, 955],
  [480, 952, 914, 1007], [524, 1005, 956, 1060], [573, 1060, 1006, 1116], [611, 1116, 1045, 1171], [660, 1171, 1094, 1226],
  [705, 1224, 1139, 1279], [746, 1297, 1186, 1362], [797, 1397, 1247, 1492], [395, 1044, 532, 1492], [532, 1044, 627, 1143],
  [532, 1143, 581, 1492], [1247, 1166, 1364, 1492],
];
const eastLines =
  "M670 348 1364 1166M670 348 610 408 1247 1166M610 408 608 662 1247 1440M705 1279 746 1297M1139 1279 1186 1297M746 1362 797 1397M1186 1362 1247 1397M821 1060V1492M522 1492V777L383 850V1067H522M539 685V1492M524 1044V1492";

const westMarks = [[937,250],[844,434],[940,488],[881,553],[844,616],[809,678],[655,671],[627,721],[787,743],[587,772],[559,826],[527,880],[500,931],[473,983],[447,1037],[415,1090],[390,1146],[360,1202],[329,1256],[315,1292],[302,1332],[283,1384],[267,1444],[288,761],[327,927],[85,1330],[490,1276],[623,1012],[547,1097],[621,1267],[563,1317],[867,1384],[1037,1093],[1243,548],[1350,607],[1160,795],[1243,1254],[1274,1256]];
const midMarks = [[363,636],[252,871],[552,871],[399,1043],[396,1245],[399,1358],[396,1391],[747,607],[924,548],[909,170],[1065,795],[1272,1093],[873,1258],[924,1254]];
const eastMarks = [[58,257],[50,490],[142,555],[204,618],[257,680],[408,667],[347,713],[293,743],[455,719],[517,769],[562,822],[610,876],[652,927],[453,922],[697,981],[739,1032],[789,1088],[580,1093],[828,1144],[876,1198],[921,1252],[946,1288],[965,1330],[996,1379],[1021,1444],[1304,1330],[988,757],[926,925],[671,1276],[557,1317],[464,1267],[165,1384],[275,457]];

const Artwork = () => (
  <Canvas>
    <Sheet viewBox="180 274 2506 1492">
      <path d="M481 270V1598H2234V270" strokeWidth="2.200" />
      <path d="M481 1285H2234" />
      <g transform="translate(500 620) scale(.56123 .44643)">
        <path d={boxes(westBoxes)} />
        <path d={westLines} />
        <path d={westCurves} />
        <path d={marks(westMarks, 1.78, 2.24)} strokeWidth="1.900" />
      </g>
      <g transform="translate(1240 620) scale(.33333 .44643)">
        <path d={boxes(midBoxes)} />
        <path d={midLines} />
        <path d={midCurves} />
        <path d={marks(midMarks, 3, 2.24)} strokeWidth="1.900" />
      </g>
      <g transform="translate(1700 620) scale(.35714 .44643)">
        <path d={boxes(eastBoxes)} />
        <path d={eastLines} />
        <path d={marks(eastMarks, 2.8, 2.24)} strokeWidth="1.900" />
      </g>
      <path d={marks([[733, 1501], [1357, 1442]], 1, 1)} strokeWidth="1.900" />
      <Lettering x="732 815 920 1030 1115 1220" y="1501">JANTAR</Lettering>
      <Lettering x="1353 1482 1587 1697 1781 1887" y="1501">MANTAR</Lettering>
    </Sheet>
  </Canvas>
);

/* ---------- scroll bars and status bar ---------- */

const VScroll = styled.div`
  display: flex;
  flex-direction: column;
  grid-row: 1 / 3;
  grid-column: 3;
  align-items: center;
  padding: 12px 0;
  background: #4a4a4a;
`;

const Thumb = styled.div`
  width: ${(p) => p.$w}px;
  height: ${(p) => p.$h}px;
  margin: ${(p) => p.$m};
  border-radius: 15px;
  background: #616161;
`;

const StatusBar = styled.footer`
  display: flex;
  grid-row: 3;
  grid-column: 1 / 4;
  align-items: center;
  padding-left: 7px;
  border-top: 2px solid #4a4a4a;
  background: ${C.panel};
`;

const StatusField = styled.div`
  display: flex;
  flex: none;
  width: ${(p) => p.$w}px;
  height: 32px;
  margin: 0 0 -2px ${(p) => p.$ml || 0}px;
  border: 2px solid #666;
  border-bottom: 0;
  border-radius: 4px 4px 0 0;
  background: ${C.field};
`;

const HScroll = styled.div`
  display: flex;
  flex: 1;
  align-items: center;
  height: 32px;
  margin-left: 11px;
  padding-left: 13px;
  background: #4a4a4a;
`;

const Arrow = ({ d, w, ml, color = C.icon }) => (
  <Glyph viewBox={`0 0 ${w} 16`} $w={w} $h={16} $ml={ml} $fill={color}><path d={d} /></Glyph>
);

const Caret = ({ d, w, h, ml, color = "#a0a0a0" }) => (
  <Glyph viewBox={`0 0 ${w} ${h}`} $w={w} $h={h} $ml={ml}><path d={d} fill="none" stroke={color} strokeWidth="1.800" /></Glyph>
);

function Status() {
  return (
    <StatusBar>
      <StatusField $w={137}>
        <Part $start={5}><Label w={58} $drop={5}>45.7%</Label></Part>
        <Part $w={36} $line><Chevron mt={6} /></Part>
      </StatusField>
      <Arrow w={16} ml={18} color="#7a7a7a" d="M0 0h4v16H0ZM16 0v16L6 8Z" />
      <Arrow w={10} ml={20} color="#7a7a7a" d="M10 0v16L0 8Z" />
      <StatusField $w={117} $ml={19}>
        <Part $start={6}><Label w={11} $drop={5}>1</Label></Part>
        <Part $w={36} $line><Chevron mt={6} /></Part>
      </StatusField>
      <Arrow w={10} ml={20} d="M0 0v16L10 8Z" />
      <Arrow w={16} ml={20} d="M12 0h4v16h-4ZM0 0v16L10 8Z" />
      <Rule $w={2} $h={30} $ml={17} $color="#4c4c4c" />
      <Label w={223} $ml={88} $drop={6} $color="#c6c6c6">Toggle Direct Selection</Label>
      <Rule $w={2} $h={30} $ml={87} $color="#4c4c4c" />
      <Arrow w={10} ml={13} d="M0 0v16L10 8Z" />
      <HScroll>
        <Caret w={8} h={14} d="M7 1 1.500 7 7 13" />
        <Thumb $w={50} $h={30} $m="0 0 0 796px" />
        <Caret w={8} h={14} ml={787} d="M1 1 6.500 7 1 13" />
      </HScroll>
    </StatusBar>
  );
}

function DocumentArea() {
  return (
    <Document>
      <TabStrip>
        <Tab>
          <Glyph viewBox="0 0 14 14" $w={14} $h={14}><path d="M1.500 1.500 12.500 12.500M12.500 1.500 1.500 12.500" stroke="#f4f4f4" strokeWidth="2.800" /></Glyph>
          <Label w={462} $ml={19} $weight={600} $color="#efefef">jantar mantar.ai* @ 45.7% (RGB/GPU Outline)</Label>
        </Tab>
      </TabStrip>
      <View>
        <Corner />
        <HRuler>
          {hundreds.map((value, n) => (
            <HUnit key={n}>
              <HTick $major><RulerText>{value}</RulerText></HTick>
              <HTick /><HTick /><HTick /><HTick />
            </HUnit>
          ))}
        </HRuler>
        <VScroll>
          <Glyph viewBox="0 0 16 9" $w={16} $h={9}><path d="M1 8 8 1.500 15 8" fill="none" stroke="#a0a0a0" strokeWidth="1.800" /></Glyph>
          <Thumb $w={30} $h={50} $m="767px 0 auto 2px" />
          <Glyph viewBox="0 0 16 9" $w={16} $h={9}><path d="M1 1 8 7.500 15 1" fill="none" stroke="#a0a0a0" strokeWidth="1.800" /></Glyph>
        </VScroll>
        <VRuler>
          {downUnits.map((value) => (
            <VUnit key={value}><VText>{value}</VText><VTicks /></VUnit>
          ))}
          <VUnit><span /><VTicks /></VUnit>
        </VRuler>
        <Artwork />
        <Status />
      </View>
    </Document>
  );
}

/* ---------- docked panels ---------- */

const Dock = styled.aside`
  flex: none;
  width: 74px;
  background: ${C.panel};
`;

const DockGroup = styled.section`
  padding: 6px 0;
  border-bottom: 2px solid ${C.dark};
`;

const DockItem = styled.button`
  display: block;
  width: 74px;
  height: 56px;
  padding: 0;
  border: 0;
  background: transparent;
`;

// Each entry: centre of the drawing's own grid, and the drawing.
const dockGroups = [
  [
    [206, 2.8, <><path d="M297 178C297 166 320 167 333 170C356 176 366 190 366 207C366 229 342 246 306 246C272 246 252 230 252 211C252 200 262 195 275 196C287 198 306 202 306 190C306 184 297 184 297 178Z" /><g fill={C.panel}><ellipse cx="279" cy="221" rx="12" ry="11" /><ellipse cx="307" cy="228" rx="11" ry="10" /><circle cx="331" cy="225" r="9" /><circle cx="347" cy="211" r="9" /><circle cx="342" cy="194" r="8" /></g></>],
    [363, 2.8, <><path d="M266 323C318 323 353 357 355 407H266Z" fill="#1e1e1e" stroke={C.icon} strokeWidth="5" /><path d="M270 404 288 329 312 339Z" fill="#4a4a4a" /><path d="M270 404 312 339 328 352Z" fill="#777" /><path d="M270 404 328 352 340 368Z" fill="#999" /><path d="M270 404 340 368 348 385Z" fill="#bbb" /><path d="M270 404 348 385 351 404Z" fill="#e8e8e8" /></>],
  ],
  [
    [594, 2.8, <><rect x="258" y="566" width="96" height="61" rx="2" /><path d="M264 571h24v23h-24ZM294 599h24v23h-24ZM324 599h24v23h-24Z" fill="#888" /><path d="M324 571h24v23h-24ZM264 599h24v23h-24Z" fill="#666" /></>],
    [750, 2.8, <><path d="M282 770Q282 767 285 767H333Q336 767 336 770V801Q336 806 330 806H288Q282 806 282 801ZM270 714C274 725 288 725 288 741L298 767H290L277 748C262 748 262 728 270 714ZM292 697 306 695V710L313 711V726L306 727 313 767H306L300 727 289 727V711L292 709ZM320 729C332 714 353 717 359 741L342 742 330 767H322L333 740Q330 729 320 729Z" /></>],
    [905, 2.8, <><circle cx="309" cy="880" r="21" /><circle cx="282" cy="910" r="21" /><circle cx="336" cy="910" r="21" /><path d="M300 895H318L315 925Q320 945 342 946V952H276V946Q298 945 303 925Z" /></>],
  ],
  [
    [1137, 2.8, <path d="M258 1103h102v6H258ZM258 1126h102v11H258ZM258 1154h102v16H258Z" />],
    [1294, 2.8, <rect x="261" y="1262" width="97" height="62" fill="url(#dockRamp)" stroke={C.icon} strokeWidth="5" />],
    [1450, 2.8, <><circle cx="291" cy="1443" r="39" /><ellipse cx="319" cy="1469" rx="37" ry="33" fill="#777" stroke={C.icon} strokeWidth="5" opacity="0.9" /></>],
  ],
  [
    [218, 2.7034, <><ellipse cx="309" cy="219" rx="36" ry="32" /><ellipse cx="309" cy="219" rx="49" ry="44" fill="none" stroke={C.icon} strokeWidth="5" strokeDasharray="10 11.500" /></>],
    [370, 2.7034, <><path d="M279 332H358V404H279Z" {...st(5)} /><path d="M270 378H312V416H270Z" /><path d="M282 390H300V405H282Z" fill={C.panel} /><path d="M258 368H294V400H258Z" fill={C.panel} /><path d="M260 370H292V398H260Z" {...st(5)} fill="#6c6c6c" /></>],
  ],
  [
    [591, 2.7034, <path d="M309 546 357 576 309 607 261 576ZM261 605 273 598 309 620 345 598 357 605 309 638Z" />],
    [740, 2.7034, <><path d="M306 708H264V784H348V746" {...st(11)} /><path d="M318 692H366V735H355V711L328 733 321 726 345 703H318Z" /></>],
    [891, 2.7034, <><path d="M254 845H316V916H254Z" {...st(5)} /><path d="M278 883H358V939H278Z" {...st(5)} fill={C.panel} /></>],
  ],
  [
    [1116, 2.7034, <><path d="M279 1089H341V1144H279Z" {...st(5)} /><path d="M264 1076h18v16h-18ZM300 1076h18v16h-18ZM336 1076h18v16h-18ZM264 1108h14v17h-14ZM341 1108h13v17h-13ZM264 1141h18v16h-18ZM300 1141h18v16h-18ZM336 1141h18v16h-18Z" /><circle cx="309" cy="1116" r="6" /></>],
    [1268, 2.7034, <path d="M264 1219h6v97h-6ZM276 1233h48v32h-48ZM276 1276h78v27h-78Z" />],
    [1419, 2.7034, <><path d="M264 1379H318V1400H288V1427H264ZM324 1406H354V1460H294V1433H324Z" /><path d="M294 1406h24v21h-24Z" /></>],
  ],
];

function DockColumn({ groups, x }) {
  return (
    <Dock>
      <PanelHead $right><Collapse /></PanelHead>
      {groups.map((items, g) => (
        <DockGroup key={g}>
          <Grip $m="0 0 4px 18px" />
          {items.map(([cy, k, art], n) => (
            <DockItem key={n}>
              <Glyph viewBox={`${x} ${cy - 28 * k} 222 ${56 * k}`} $w={74} $h={56}>
                <defs>
                  <linearGradient id="dockRamp"><stop offset="0" stopColor="#2b2b2b" /><stop offset="1" stopColor="#f0f0f0" /></linearGradient>
                </defs>
                {art}
              </Glyph>
            </DockItem>
          ))}
        </DockGroup>
      ))}
    </Dock>
  );
}

const libraryGroups = [
  [
    [208, 2.8, <><path d="M531 159 562 173V208L531 222 500 208V173Z" fill="#747474" stroke={C.icon} strokeWidth="5" /><path d="M500 173 531 188 562 173M531 188V222" {...st(4)} /><path d="M576 162h24v23h-24ZM576 196h24v22h-24ZM498 235H600V258H498Z" /><path d="M577 241h17l-8 9Z" fill="#444" /></>],
    [363, 2.8, <><path d="M490 348C500 320 530 325 536 330C560 312 608 318 611 355" fill="none" stroke="#333" strokeWidth="5" /><rect x="486" y="334" width="90" height="75" rx="37" /><rect x="525" y="324" width="87" height="85" rx="42" /><path d="M536 396C508 402 494 386 496 370C498 348 528 340 546 356L566 375M601 366C604 336 562 326 545 348M601 366C598 392 560 398 546 386L522 366" fill="none" stroke={C.panel} strokeWidth="6" /></>],
  ],
];

export default function App() {
  return (
    <>
      <GlobalStyle />
      <SystemMenu />
      <AppWindow>
        <AppTitle />
        <ControlBar />
        <Workspace>
          <Tools />
          <Seam />
          <DocumentArea />
          <Seam />
          <DockColumn groups={dockGroups} x={192} />
          <Seam />
          <DockColumn groups={libraryGroups} x={432} />
        </Workspace>
      </AppWindow>
    </>
  );
}
